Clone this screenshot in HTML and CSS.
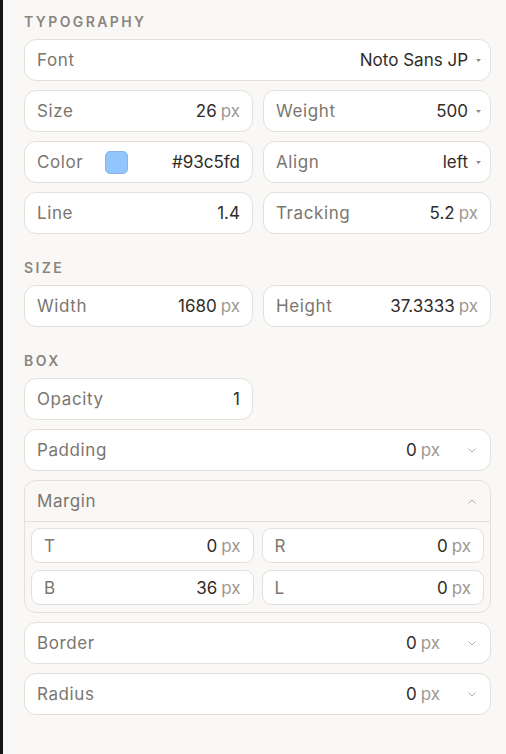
FILE: index.html
```html
<!DOCTYPE html>
<html>
<head>
<meta charset="utf-8">
<link rel="stylesheet" href="styles.css">
</head>
<body>
<div class="panel">
  <section class="section first">
    <h3 class="heading">TYPOGRAPHY</h3>
    <div class="grid">
      <div class="field span2"><span class="label">Font</span><span class="value">Noto Sans JP</span><svg class="caret" viewBox="0 0 5 3"><path d="M0 0H5L2.5 3Z"/></svg></div>
      <div class="field"><span class="label">Size</span><span class="value">26</span><span class="unit">px</span></div>
      <div class="field"><span class="label">Weight</span><span class="value">500</span><svg class="caret" viewBox="0 0 5 3"><path d="M0 0H5L2.5 3Z"/></svg></div>
      <div class="field"><span class="label">Color</span><span class="swatch"></span><span class="value">#93c5fd</span></div>
      <div class="field"><span class="label">Align</span><span class="value">left</span><svg class="caret" viewBox="0 0 5 3"><path d="M0 0H5L2.5 3Z"/></svg></div>
      <div class="field"><span class="label">Line</span><span class="value">1.4</span></div>
      <div class="field"><span class="label">Tracking</span><span class="value">5.2</span><span class="unit">px</span></div>
    </div>
  </section>
  <section class="section">
    <h3 class="heading">SIZE</h3>
    <div class="grid">
      <div class="field"><span class="label">Width</span><span class="value">1680</span><span class="unit">px</span></div>
      <div class="field"><span class="label">Height</span><span class="value">37.3333</span><span class="unit">px</span></div>
    </div>
  </section>
  <section class="section">
    <h3 class="heading">BOX</h3>
    <div class="grid">
      <div class="field"><span class="label">Opacity</span><span class="value">1</span></div>
      <div class="field span2"><span class="label">Padding</span><span class="value">0</span><span class="unit">px</span><svg class="chev" viewBox="0 0 8 5"><path d="M0.5 0.5L4 4L7.5 0.5"/></svg></div>
      <div class="group span2">
        <div class="group-head"><span class="label">Margin</span><svg class="chev up" viewBox="0 0 8 5"><path d="M0.5 4.5L4 1L7.5 4.5"/></svg></div>
        <div class="group-body">
          <div class="field small"><span class="label">T</span><span class="value">0</span><span class="unit">px</span></div>
          <div class="field small"><span class="label">R</span><span class="value">0</span><span class="unit">px</span></div>
          <div class="field small"><span class="label">B</span><span class="value">36</span><span class="unit">px</span></div>
          <div class="field small"><span class="label">L</span><span class="value">0</span><span class="unit">px</span></div>
        </div>
      </div>
      <div class="field span2"><span class="label">Border</span><span class="value">0</span><span class="unit">px</span><svg class="chev" viewBox="0 0 8 5"><path d="M0.5 0.5L4 4L7.5 0.5"/></svg></div>
      <div class="field span2"><span class="label">Radius</span><span class="value">0</span><span class="unit">px</span><svg class="chev" viewBox="0 0 8 5"><path d="M0.5 0.5L4 4L7.5 0.5"/></svg></div>
    </div>
  </section>
</div>
</body>
</html>
```
FILE: styles.css
```css
* { box-sizing: border-box; }
html, body { margin: 0; padding: 0; }
body {
  background: #f9f8f6;
  border-left: 3px solid #151515;
  min-height: 754px;
  font-family: Inter, "Noto Sans", sans-serif;
  color: #2b2825;
}
.panel {
  padding: 13px 15px 0 21px;
}
.section { margin-top: 25px; }
.section.first { margin-top: 0; }
.heading {
  margin: 0 0 9px 0;
  height: 17px;
  line-height: 17px;
  font-size: 14px;
  font-weight: 600;
  letter-spacing: 2.4px;
  color: #8a857e;
}
.grid {
  display: grid;
  grid-template-columns: 229px 228px;
  column-gap: 10px;
  row-gap: 9px;
}
.span2 { grid-column: 1 / 3; }
.field {
  height: 42px;
  display: flex;
  align-items: center;
  background: #ffffff;
  border: 1px solid #e3e0db;
  border-radius: 12px;
  padding: 0 12px;
  font-size: 17px;
}
.label {
  color: #7b766f;
  letter-spacing: 0.6px;
  flex: 0 0 auto;
}
.value {
  margin-left: auto;
  color: #302c29;
}
.unit {
  margin-left: 4px;
  color: #9d9891;
}
.caret {
  width: 5px;
  height: 3px;
  margin-left: 8px;
  margin-right: -3px;
  fill: #8f8a83;
}
.chev {
  width: 8px;
  height: 5px;
  margin-left: 28px;
  margin-right: 2px;
  fill: none;
  stroke: #b3aea7;
  stroke-width: 1;
}
.swatch {
  width: 23px;
  height: 23px;
  margin-left: 22px;
  border-radius: 5px;
  background: #93c5fd;
  border: 1px solid #86b4e8;
}
.group {
  border: 1px solid #e3e0db;
  border-radius: 12px;
  background: #f9f8f6;
}
.group-head {
  height: 41px;
  display: flex;
  align-items: center;
  padding: 0 12px;
  font-size: 17px;
  border-bottom: 1px solid #e3e0db;
}
.group-head .chev { margin-left: auto; }
.group-body {
  display: grid;
  grid-template-columns: 1fr 1fr;
  gap: 7px 8px;
  padding: 6px 6px 7px 6px;
}
.field.small {
  height: 35px;
  border-radius: 9px;
}
```
